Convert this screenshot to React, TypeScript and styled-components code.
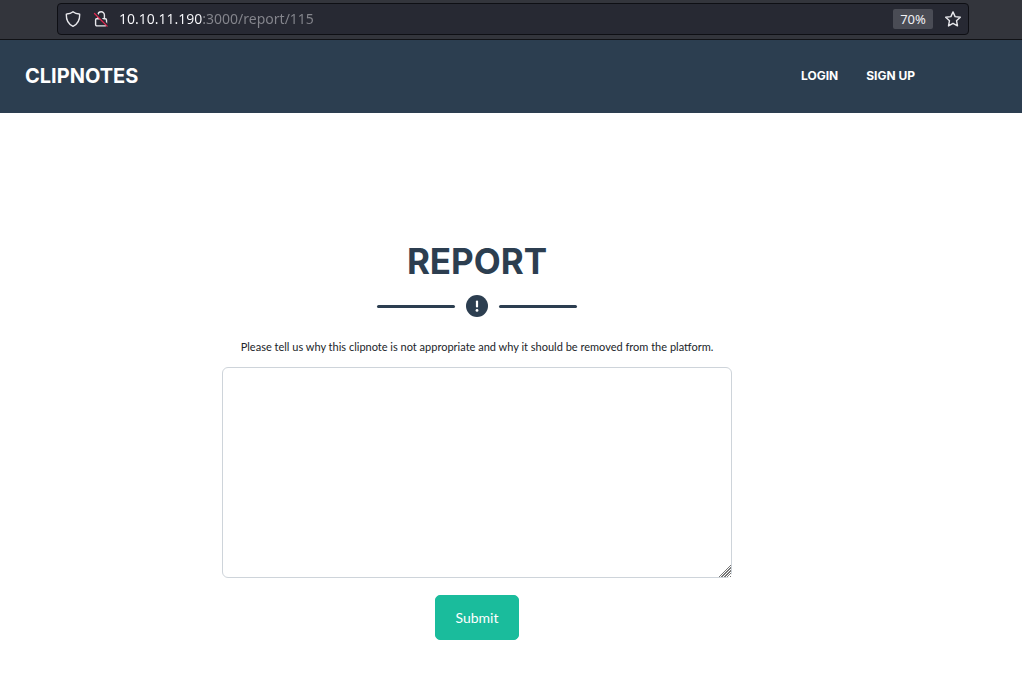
import React from "react";
import styled, { createGlobalStyle } from "styled-components";

const navy = "#2c3e50";
const heading = `Inter, "Open Sans", sans-serif`;

const GlobalStyle = createGlobalStyle`
  *, *::before, *::after { box-sizing: border-box; }
  body {
    margin: 0;
    background: #fff;
    color: #212529;
    font: 12px/18px Lato, "Liberation Sans", sans-serif;
  }
`;

const BrowserBar = styled.div`
  display: flex;
  height: 40px;
  padding: 3px 53px 4px 57px;
  background: #33353c;
  border-bottom: 1px solid #111216;
`;

const AddressBox = styled.div`
  flex: 1;
  display: flex;
  align-items: center;
  padding: 0 6px;
  background: #272933;
  border: 1px solid #0e0f14;
  border-radius: 4px;
`;

const IconButton = styled.button`
  display: flex;
  padding: 0;
  border: 0;
  background: none;
  color: #e8e8ec;

  & + & { margin-left: 11px; }
`;

const UrlInput = styled.input`
  flex: 1;
  min-width: 0;
  height: 24px;
  margin: 0 11px 0 10px;
  padding: 0;
  border: 0;
  outline: 0;
  font: 14px/24px "Noto Sans", sans-serif;
  color: transparent;
  background: linear-gradient(90deg, #fbfbfe 84px, #85868d 84px);
  background-clip: text;
  -webkit-background-clip: text;
`;

const ZoomButton = styled.button`
  width: 40px;
  height: 20px;
  margin-right: 11px;
  padding: 0;
  border: 0;
  border-radius: 2px;
  background: #4a4c55;
  color: #f0f0f4;
  font: 13px/20px "Noto Sans", sans-serif;
`;

const Navbar = styled.header`
  display: flex;
  align-items: center;
  justify-content: space-between;
  height: 73px;
  padding: 0 107px 2px 25px;
  background: ${navy};
`;

const Brand = styled.a`
  color: #fff;
  font: 700 20px/30px ${heading};
  text-decoration: none;
`;

const NavLinks = styled.nav`
  display: flex;
  gap: 28px;
`;

const NavLink = styled.a`
  color: #fff;
  font: 700 12px/18px ${heading};
  text-decoration: none;
`;

const Main = styled.main`
  display: flex;
  flex-direction: column;
  align-items: center;
  padding: 128px 68px 37px 0;
`;

const Title = styled.h1`
  margin: 0;
  color: ${navy};
  font: 700 35px/40px ${heading};
`;

const Divider = styled.div`
  display: flex;
  align-items: center;
  gap: 11px;
  margin-top: 14px;
  color: ${navy};

  svg { display: block; }
`;

const Rule = styled.span`
  width: 78px;
  height: 3px;
  border-radius: 2px;
  background: currentColor;
`;

const Form = styled.form`
  display: flex;
  flex-direction: column;
  align-items: center;
  width: 100%;
  max-width: 510px;
  margin-top: 21px;
`;

const Label = styled.label`
  font-size: 11px;
  line-height: 18px;
`;

const Reason = styled.textarea`
  display: block;
  width: 100%;
  height: 211px;
  margin-top: 11px;
  padding: 8px;
  border: 1px solid #ced4da;
  border-radius: 6px;
  background: #fff;
  font: inherit;
  resize: both;

  &::-webkit-resizer {
    background:
      linear-gradient(135deg, #fff 58%, transparent 58%),
      repeating-linear-gradient(135deg, #777 0 1px, #fff 1px 2px);
  }
`;

const Submit = styled.button`
  min-width: 84px;
  height: 45px;
  margin-top: 17px;
  padding: 0 19px;
  border: 1px solid #1abc9c;
  border-radius: 5px;
  background: #1abc9c;
  color: #fff;
  font: 14px/19px Lato, sans-serif;
`;

const ShieldIcon = () => (
  <svg width="18" height="18" viewBox="0 0 18 18" fill="none" stroke="currentColor" strokeWidth="1.4" strokeLinejoin="round">
    <path d="M9 1.7c1.7 1.4 3.9 2.1 6.3 2.3.2 0 .4.2.4.5C15.8 10.3 13.5 14.3 9 16.3 4.5 14.3 2.2 10.3 2.3 4.5c0-.3.2-.5.4-.5C5.1 3.8 7.3 3.1 9 1.7z" />
  </svg>
);

const InsecureIcon = () => (
  <svg width="16" height="18" viewBox="0 0 16 18" fill="none" strokeLinecap="round">
    <path d="M5 7.5V5a3.2 3.2 0 0 1 6.4 0v3M3.6 8.7h8.6c.8 0 1.3.5 1.3 1.3v4.6c0 .8-.5 1.3-1.3 1.3H3.9c-.8 0-1.3-.5-1.3-1.3V10c0-.8.5-1.3 1-1.3z" stroke="currentColor" strokeWidth="1.4" />
    <path d="M2.2 3l12.400 12.400" stroke="#272933" strokeWidth="2.400" />
    <path d="M1.500 3.500l12.600 12.600" stroke="#e22850" strokeWidth="1.300" />
  </svg>
);

const StarIcon = () => (
  <svg width="18" height="18" viewBox="0 0 18 18" fill="none" stroke="currentColor" strokeWidth="1.4" strokeLinejoin="round">
    <path d="M9 1.9l2.1 4.7 5.2.6-3.8 3.5 1 5.2L9 13.3l-4.5 2.6 1-5.2L1.7 7.2l5.2-.6z" />
  </svg>
);

const AlertIcon = () => (
  <svg width="22" height="22" viewBox="0 0 22 22" aria-hidden="true">
    <circle cx="11" cy="11" r="11" fill="currentColor" />
    <path d="M11 6.6v4.8" stroke="#fff" strokeWidth="2.2" strokeLinecap="round" />
    <circle cx="11" cy="15.4" r="1.4" fill="#fff" />
  </svg>
);

export default function App() {
  return (
    <>
      <GlobalStyle />
      <BrowserBar>
        <AddressBox>
          <IconButton type="button" aria-label="Tracking protection"><ShieldIcon /></IconButton>
          <IconButton type="button" aria-label="Connection not secure"><InsecureIcon /></IconButton>
          <UrlInput type="text" aria-label="Address" defaultValue="10.10.11.190:3000/report/115" spellCheck={false} />
          <ZoomButton type="button" aria-label="Zoom level 70%">70%</ZoomButton>
          <IconButton type="button" aria-label="Bookmark this page"><StarIcon /></IconButton>
        </AddressBox>
      </BrowserBar>
      <Navbar>
        <Brand href="#">CLIPNOTES</Brand>
        <NavLinks>
          <NavLink href="#login">LOGIN</NavLink>
          <NavLink href="#signup">SIGN UP</NavLink>
        </NavLinks>
      </Navbar>
      <Main>
        <Title>REPORT</Title>
        <Divider>
          <Rule />
          <AlertIcon />
          <Rule />
        </Divider>
        <Form onSubmit={(event: React.FormEvent) => event.preventDefault()}>
          <Label htmlFor="reason">
            Please tell us why this clipnote is not appropriate and why it should be removed from the platform.
          </Label>
          <Reason id="reason" name="reason" />
          <Submit type="submit">Submit</Submit>
        </Form>
      </Main>
    </>
  );
}
